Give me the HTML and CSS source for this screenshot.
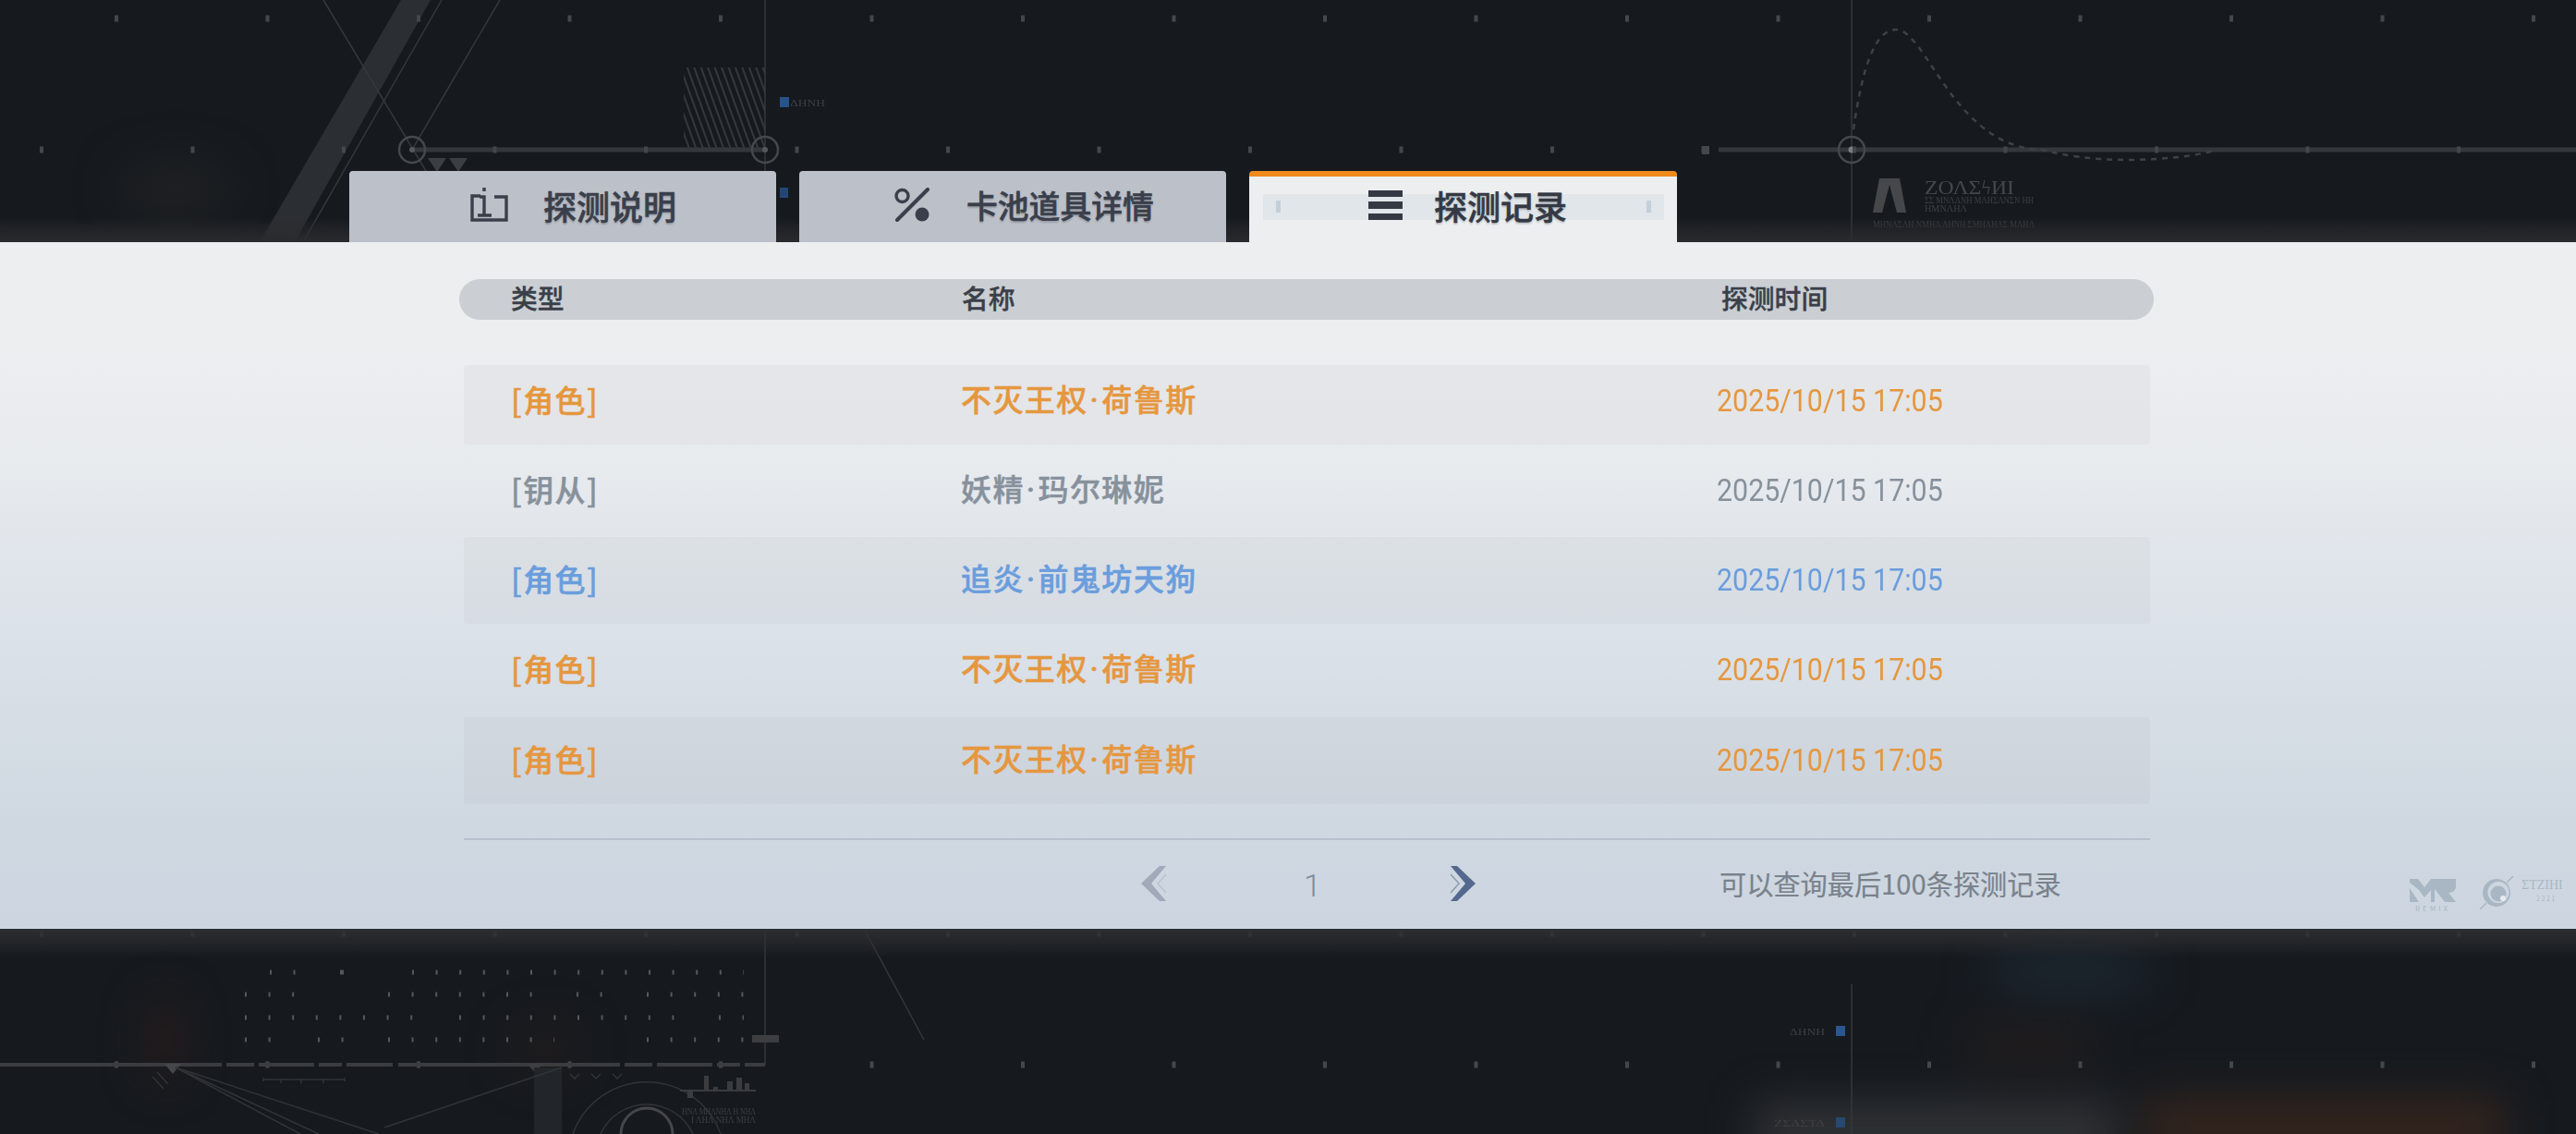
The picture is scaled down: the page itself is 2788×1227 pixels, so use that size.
FILE: index.html
```html
<!DOCTYPE html>
<html lang="zh-CN">
<head>
    <meta charset="UTF-8">
    <meta name="viewport" content="width=device-width, initial-scale=1.0">
    <title>探测记录</title>
    <link rel="stylesheet" href="styles.css">
</head>
<body>
    <div class="screen">
        <!-- фон: чертёж -->
        <svg class="backdrop" viewBox="0 0 2788 1227" aria-hidden="true">
            <defs>
                <filter id="blur30" color-interpolation-filters="sRGB"><feGaussianBlur stdDeviation="24"/></filter>
                <filter id="blur2" color-interpolation-filters="sRGB"><feGaussianBlur stdDeviation="0.7"/></filter>
                <linearGradient id="fadeTop" x1="0" y1="0" x2="0" y2="1">
                    <stop offset="0" stop-color="#2a2b2e" stop-opacity="0"/>
                    <stop offset="1" stop-color="#2a2b2e"/>
                </linearGradient>
                <linearGradient id="fadeBottom" x1="0" y1="0" x2="0" y2="1">
                    <stop offset="0" stop-color="#2d2e31"/>
                    <stop offset="1" stop-color="#2d2e31" stop-opacity="0"/>
                </linearGradient>
                <pattern id="hatch" width="7" height="7" patternUnits="userSpaceOnUse" patternTransform="rotate(-20)">
                    <line x1="2" y1="0" x2="2" y2="7" stroke="#3d4044" stroke-width="1.6"/>
                </pattern>
            </defs>

            <g filter="url(#blur30)">
                <ellipse cx="190" cy="205" rx="60" ry="30" fill="#1f2123"/>
                <ellipse cx="178" cy="1125" rx="18" ry="45" fill="#2a1c1a"/>
                <ellipse cx="590" cy="1135" rx="35" ry="25" fill="#211c1c"/>
                <ellipse cx="2240" cy="1050" rx="90" ry="26" fill="#1c2730"/>
                <rect x="2130" y="1115" width="130" height="35" fill="#241d1c"/>
                <rect x="1900" y="1195" width="390" height="60" fill="#323437"/>
                <rect x="2320" y="1190" width="390" height="60" fill="#36251d"/>
            </g>

            <g filter="url(#blur2)">
                <polygon points="434,0 466,0 319,262 281,262" fill="#2b2e32"/>
                <g fill="none" stroke="#34373b" stroke-width="1.5">
                    <line x1="478" y1="0" x2="328" y2="262"/>
                    <line x1="541" y1="0" x2="446" y2="162"/>
                    <line x1="350" y1="0" x2="470" y2="200"/>
                    <line x1="828" y1="0" x2="828" y2="185"/>
                    <line x1="2004" y1="0" x2="2004" y2="262"/>
                    <line x1="828" y1="1005" x2="828" y2="1152"/>
                    <line x1="2004" y1="1065" x2="2004" y2="1227"/>
                    <line x1="935" y1="1005" x2="1000" y2="1125"/>
                </g>

                <rect x="740" y="73" width="88" height="89" fill="url(#hatch)"/>
                <polygon points="463,171 483,171 473,186" fill="#3b3e43"/>
                <polygon points="486,171 506,171 496,186" fill="#3b3e43"/>

                <g fill="none" stroke="#34373b" stroke-width="5">
                    <line x1="446" y1="162" x2="828" y2="162"/>
                    <line x1="1860" y1="162" x2="2788" y2="162"/>
                </g>
                <g fill="none" stroke="#45484c" stroke-width="2.5">
                    <ellipse cx="446" cy="162" rx="14" ry="14"/>
                    <ellipse cx="828" cy="162" rx="14" ry="14"/>
                    <ellipse cx="2004" cy="162" rx="14" ry="14"/>
                </g>
                <circle cx="446" cy="162" r="3" fill="#55585c"/>
                <circle cx="828" cy="162" r="3" fill="#55585c"/>
                <circle cx="2004" cy="162" r="3.5" fill="#7a7c80"/>

                <!-- точки сетки -->
                <g fill="none" stroke="#44474b" stroke-width="7">
                    <line x1="124" y1="20" x2="2788" y2="20" stroke-dasharray="4 159.5"/>
                    <line x1="43" y1="162" x2="2788" y2="162" stroke-dasharray="4 159.5"/>
                    <line x1="43" y1="1010" x2="2788" y2="1010" stroke-dasharray="4 159.5"/>
                    <line x1="124" y1="1152" x2="2788" y2="1152" stroke-dasharray="4 159.5"/>
                </g>

                <path d="M2006 140 C2016 70 2030 32 2052 32 C2085 32 2115 160 2210 162 C2250 172 2280 173 2310 173 C2350 172 2380 168 2400 162" fill="none" stroke="#3e4145" stroke-width="2.5" stroke-dasharray="6 6"/>
                <polygon points="2034,193 2056,193 2063,230 2053,230 2045,200 2037,230 2027,230" fill="#45474b"/>
                <text class="art-title" x="2083" y="210" textLength="97" lengthAdjust="spacingAndGlyphs">ΖΟΛΣϟИΙ</text>
                <text class="art-small" x="2083" y="220" textLength="118" lengthAdjust="spacingAndGlyphs">ΣΣ ΜΝΛΛΝΗ ΜΛΗΣΛΝΣΝ ΗΗ</text>
                <text class="art-small" x="2083" y="229" textLength="46" lengthAdjust="spacingAndGlyphs">ΗΜΝΛΗΛ</text>
                <text class="art-small" x="2027" y="246" textLength="175" lengthAdjust="spacingAndGlyphs">ΜΗΝΛΣΛΗ ΝΜΗΛ ΛΗΝΗ ΣΜΗΛΗΛΣ ΜΛΗΛ</text>

                <rect x="844" y="105" width="10" height="11" fill="#27528a"/>
                <text class="art-small" x="855" y="115" textLength="38" lengthAdjust="spacingAndGlyphs">ΔΗΝΗ</text>
                <rect x="844" y="203" width="9" height="11" fill="#234676"/>
                <rect x="1987" y="1110" width="10" height="11" fill="#2b5690"/>
                <text class="art-small" x="1937" y="1120" textLength="38" lengthAdjust="spacingAndGlyphs">ΔΗΝΗ</text>
                <rect x="1987" y="1209" width="10" height="11" fill="#27486f"/>
                <text class="art-small" x="1920" y="1219" textLength="55" lengthAdjust="spacingAndGlyphs">ΖΣΔΣΤΔ</text>
                <rect x="1842" y="158" width="8" height="9" fill="#44474b"/>

                <!-- матрица точек -->
                <g fill="none" stroke="#55585c" stroke-width="5">
                    <line x1="292" y1="1052" x2="320" y2="1052" stroke-dasharray="2 23.5"/>
                    <line x1="368" y1="1052" x2="372" y2="1052"/>
                    <line x1="446" y1="1052" x2="805" y2="1052" stroke-dasharray="2 23.6"/>
                    <line x1="265" y1="1076" x2="320" y2="1076" stroke-dasharray="2 23.6"/>
                    <line x1="420" y1="1076" x2="576" y2="1076" stroke-dasharray="2 23.6"/>
                    <line x1="624" y1="1076" x2="652" y2="1076" stroke-dasharray="2 23.6"/>
                    <line x1="700" y1="1076" x2="805" y2="1076" stroke-dasharray="2 23.6"/>
                    <line x1="265" y1="1101" x2="450" y2="1101" stroke-dasharray="2 23.6"/>
                    <line x1="497" y1="1101" x2="730" y2="1101" stroke-dasharray="2 23.6"/>
                    <line x1="778" y1="1101" x2="805" y2="1101" stroke-dasharray="2 23.6"/>
                    <line x1="265" y1="1125" x2="296" y2="1125" stroke-dasharray="2 23.6"/>
                    <line x1="344" y1="1125" x2="372" y2="1125" stroke-dasharray="2 23.6"/>
                    <line x1="420" y1="1125" x2="600" y2="1125" stroke-dasharray="2 23.6"/>
                    <line x1="700" y1="1125" x2="805" y2="1125" stroke-dasharray="2 23.6"/>
                </g>

                <rect x="814" y="1120" width="29" height="8" fill="#3c3e42"/>
                <line x1="0" y1="1152" x2="828" y2="1152" stroke="#3a3c40" stroke-width="4" stroke-dasharray="240 5 30 5 60 5 25 5 50 6"/>
                <polygon points="178,1151 196,1151 187,1162" fill="#45474b"/>
                <polygon points="570,1151 588,1151 579,1160" fill="#3c3e42"/>
                <rect x="578" y="1155" width="30" height="72" fill="#222529"/>
                <g fill="none" stroke="#303337" stroke-width="1.5">
                    <line x1="190" y1="1155" x2="410" y2="1227"/>
                    <line x1="190" y1="1155" x2="345" y2="1227"/>
                    <line x1="190" y1="1155" x2="325" y2="1227"/>
                    <line x1="416" y1="1220" x2="608" y2="1155"/>
                    <line x1="165" y1="1165" x2="177" y2="1178"/>
                    <line x1="170" y1="1160" x2="182" y2="1173"/>
                    <path d="M285 1170 V1166 M285 1168 H373 M373 1170 V1166 M304 1168 V1172 M326 1168 V1172 M350 1168 V1172"/>
                    <path d="M620 1227 A85 85 0 0 1 780 1227"/>
                    <path d="M650 1227 A55 55 0 0 1 750 1227"/>
                    <path d="M617 1162 L622 1167 L627 1162 M640 1162 L645 1167 L650 1162 M663 1162 L668 1167 L673 1162"/>
                </g>
                <path d="M672 1227 A28 28 0 0 1 728 1227" fill="none" stroke="#45474b" stroke-width="3"/>
                <path d="M736 1180 H818" stroke="#3a3c40" stroke-width="2"/>
                <path d="M744 1180v8h6v-8zM762 1164h5v16h-5zM772 1176h5v4h-5zM787 1170h6v10h-6zM797 1166h6v14h-6zM806 1172h5v8h-5z" fill="#3a3c40"/>
                <text class="art-small" x="738" y="1206" textLength="80" lengthAdjust="spacingAndGlyphs">ΗΝΛ ΜΗΛΝΗΛ Η ΝΗΛ</text>
                <text class="art-small" x="748" y="1215" textLength="70" lengthAdjust="spacingAndGlyphs">Ι ΛΗΛ ΝΗΛ ΜΗΛ</text>
            </g>

            <rect x="0" y="235" width="2788" height="27" fill="url(#fadeTop)"/>
            <rect x="0" y="1005" width="2788" height="32" fill="url(#fadeBottom)"/>
        </svg>

        <nav class="tabs">
            <div class="tab tab-info">
                <svg class="tab-icon" width="41" height="38" viewBox="0 0 41 38">
                    <path d="M11 9 H2 V35 H39 V10 H26" fill="none" stroke="#3a3f4b" stroke-width="3.4"/>
                    <path d="M15 0 v4 M10 10 H15 V29 M8 30 H23" fill="none" stroke="#3a3f4b" stroke-width="3.4"/>
                </svg>
                <span>探测说明</span>
            </div>
            <div class="tab tab-items">
                <svg class="tab-icon" width="38" height="38" viewBox="0 0 38 38">
                    <circle cx="8.5" cy="9" r="6.5" fill="none" stroke="#3a3f4b" stroke-width="3.4"/>
                    <line x1="3" y1="35" x2="36" y2="2" stroke="#3a3f4b" stroke-width="4" stroke-linecap="round"/>
                    <circle cx="30" cy="29" r="7.5" fill="#3a3f4b"/>
                </svg>
                <span>卡池道具详情</span>
            </div>
            <div class="tab tab-log active">
                <div class="tab-deco">
                    <i class="deco-mark left"></i>
                    <i class="deco-mark right"></i>
                </div>
                <svg class="tab-icon" width="37" height="32" viewBox="0 0 37 32">
                    <rect width="37" height="7" fill="#343944"/>
                    <rect y="12" width="37" height="8" fill="#343944"/>
                    <rect y="25" width="37" height="7" fill="#343944"/>
                </svg>
                <span>探测记录</span>
            </div>
        </nav>

        <main class="panel">
            <div class="table-head">
                <span>类型</span>
                <span>名称</span>
                <span>探测时间</span>
            </div>

            <div class="rows">
                <div class="row band first gold">
                    <span>[角色]</span>
                    <span class="name">不灭王权<span class="dot">·</span>荷鲁斯</span>
                    <span class="time">2025/10/15 17:05</span>
                </div>
                <div class="row grey">
                    <span>[钥从]</span>
                    <span class="name">妖精<span class="dot">·</span>玛尔琳妮</span>
                    <span class="time">2025/10/15 17:05</span>
                </div>
                <div class="row band blue">
                    <span>[角色]</span>
                    <span class="name">追炎<span class="dot">·</span>前鬼坊天狗</span>
                    <span class="time">2025/10/15 17:05</span>
                </div>
                <div class="row gold">
                    <span>[角色]</span>
                    <span class="name">不灭王权<span class="dot">·</span>荷鲁斯</span>
                    <span class="time">2025/10/15 17:05</span>
                </div>
                <div class="row band gold">
                    <span>[角色]</span>
                    <span class="name">不灭王权<span class="dot">·</span>荷鲁斯</span>
                    <span class="time">2025/10/15 17:05</span>
                </div>
            </div>

            <div class="pager">
                <svg class="chevron" width="28" height="38" viewBox="0 0 28 38">
                    <polygon points="27,0 20,0 0,19 20,38 27,38 11,19" fill="#a0aab8"/>
                    <path d="M27 9 L18 19 L27 29" fill="none" stroke="#b9c1cc" stroke-width="1.5"/>
                </svg>
                <span class="page-num">1</span>
                <svg class="chevron" width="28" height="38" viewBox="0 0 28 38">
                    <polygon points="1,0 8,0 28,19 8,38 1,38 17,19" fill="#55698f"/>
                    <path d="M1 9 L10 19 L1 29" fill="none" stroke="#8b99b0" stroke-width="1.5"/>
                </svg>
                <span class="pager-note">可以查询最后100条探测记录</span>
            </div>

            <!-- логотипы в углу -->
            <div class="logos">
                <div class="logo-mr">
                    <svg width="50" height="25" viewBox="0 0 50 25">
                        <path d="M0 0 H9 L16 9 L23 0 H50 V8 C50 13 46 15 42 15 L50 25 H38 L27 11 V25 H23 V12 L16 20 L10 12 L0 4Z M0 10 L10 25 H0Z" fill="#a9b7c4"/>
                    </svg>
                    <span>REMIX</span>
                </div>
                <svg class="logo-ring" width="38" height="38" viewBox="0 0 38 38">
                    <line x1="1" y1="37" x2="8" y2="30" stroke="#a9b7c4" stroke-width="1.5"/>
                    <line x1="30" y1="8" x2="37" y2="1" stroke="#a9b7c4" stroke-width="1.5"/>
                    <path fill-rule="evenodd" d="M19 4 A15 15 0 1 0 19 34 A15 15 0 1 0 19 4Z M21 7 A11.5 11.5 0 1 1 21 30 A11.5 11.5 0 1 1 21 7Z" fill="#a9b7c4"/>
                    <circle cx="21" cy="20" r="8.5" fill="#a9b7c4"/>
                    <circle cx="26" cy="25" r="3" fill="#e6ebef"/>
                </svg>
                <div class="logo-name">
                    <span class="logo-title">ΣΤΖΙΗΙ</span>
                    <span class="logo-sub">2 2 2 1</span>
                </div>
            </div>
        </main>
    </div>
</body>
</html>
```

FILE: styles.css
```css
* {
    box-sizing: border-box;
}
body {
    margin: 0;
    background-color: #161a1f;
    font-family: "Noto Sans CJK SC", "Noto Sans", sans-serif;
}
.screen {
    position: relative;
    width: 2788px;
    height: 1227px;
    overflow: hidden;
    padding-top: 185px;
    background-color: #161a1f;
}
.backdrop {
    position: absolute;
    top: 0;
    left: 0;
    width: 2788px;
    height: 1227px;
}
.art-title {
    font-family: "Liberation Serif", serif;
    font-size: 20px;
    fill: #45474b;
}
.art-small {
    font-family: "Liberation Serif", serif;
    font-size: 11px;
    fill: #3c3f43;
}

/* Вкладки */
.tabs {
    position: relative;
    display: flex;
    gap: 25px;
    height: 77px;
    padding-left: 378px;
}
.tab {
    position: relative;
    display: flex;
    align-items: center;
    width: 462px;
    height: 77px;
    padding-bottom: 3px;
    background-color: #bcc0c8;
    border-radius: 4px 4px 0 0;
    color: #3a3f4b;
    font-size: 36px;
    font-weight: 500;
    line-height: 1;
    -webkit-text-stroke: 0.6px currentColor;
    text-shadow: 0 2px 2px rgba(40,44,56,0.25);
}
.tab-icon {
    flex: none;
    position: relative;
}
.tab span {
    position: relative;
}
.tab-info {
    padding-left: 131px;
    gap: 38px;
}
.tab-items {
    padding-left: 103px;
    gap: 40px;
    font-size: 33.8px;
}
.tab-log {
    padding-left: 129px;
    gap: 34px;
}
.tab.active {
    width: 463px;
    padding-bottom: 9px;
    background-color: #eceef0;
    border-top: 6px solid #f08a1d;
    color: #343944;
}
.tab-deco {
    position: absolute;
    top: 19px;
    left: 15px;
    right: 14px;
    height: 28px;
    background-color: #e0e6ea;
}
.deco-mark {
    position: absolute;
    top: 7px;
    width: 5px;
    height: 13px;
    background-color: #c3d0da;
}
.deco-mark.left {
    left: 14px;
}
.deco-mark.right {
    right: 14px;
}

/* Панель */
.panel {
    position: relative;
    height: 743px;
    padding-top: 40px;
    background: linear-gradient(180deg, #eceef0 0%, #eceef0 15%, #e8ebee 32%, #e3e7ec 40%, #d9e0e7 62%, #cfd8e1 85%, #cdd6e0 100%);
}
.table-head {
    display: grid;
    grid-template-columns: 488px 822px 1fr;
    align-items: center;
    width: 1834px;
    height: 44px;
    margin-left: 497px;
    padding-left: 56px;
    padding-bottom: 4px;
    background-color: #cbced3;
    border-radius: 22px;
    color: #3a3f49;
    font-size: 28.8px;
    font-weight: 500;
    line-height: 1;
    -webkit-text-stroke: 0.4px currentColor;
}
.rows {
    width: 1825px;
    margin-left: 502px;
    margin-top: 49px;
}
.row {
    display: grid;
    grid-template-columns: 487px 818px 1fr;
    align-items: center;
    height: 94px;
    margin-bottom: 3.3px;
    padding-left: 51px;
    padding-bottom: 3px;
    border-radius: 4px;
    font-size: 33px;
    font-weight: 500;
    letter-spacing: 1.4px;
    line-height: 1;
    -webkit-text-stroke: 0.5px currentColor;
}
.row.band {
    background-color: rgba(100,100,100,0.048);
}
.row.first {
    height: 86px;
    margin-bottom: 2.7px;
    padding-bottom: 11px;
}
.row.gold {
    color: #e5973f;
}
.row.grey {
    color: #87919c;
}
.row.blue {
    color: #6a9ddc;
}
.dot {
    margin: 0 2px;
    font-family: Roboto, sans-serif;
}
.time {
    display: inline-block;
    padding-top: 2px;
    font-family: Roboto, "Noto Sans", sans-serif;
    font-size: 33px;
    font-weight: 400;
    letter-spacing: 0;
    white-space: nowrap;
    -webkit-text-stroke: 0;
    transform: scaleX(0.92);
    transform-origin: left center;
}

/* Пагинация */
.pager {
    display: flex;
    align-items: center;
    width: 1825px;
    height: 97px;
    margin-left: 502px;
    margin-top: 37px;
    padding-left: 733px;
    border-top: 2px solid #b5c0cc;
}
.page-num {
    width: 306px;
    padding-left: 148px;
    padding-top: 3px;
    color: #7e8ca0;
    font-family: Roboto, sans-serif;
    font-size: 34px;
    font-weight: 300;
    line-height: 1;
}
.pager-note {
    margin-left: 264px;
    color: #7a828c;
    font-size: 29.2px;
    line-height: 1;
    white-space: nowrap;
    -webkit-text-stroke: 0.2px currentColor;
}

.logos {
    position: absolute;
    top: 689px;
    left: 2608px;
    display: flex;
    gap: 25px;
    align-items: flex-start;
    color: #a9b7c4;
}
.logo-mr {
    display: flex;
    flex-direction: column;
    gap: 3px;
    align-items: center;
    font-size: 8px;
    letter-spacing: 3px;
    line-height: 1;
}
.logo-ring {
    margin-top: -4px;
}
.logo-name {
    display: flex;
    flex-direction: column;
    align-items: flex-start;
    gap: 4px;
    margin-left: -17px;
    line-height: 1;
    white-space: nowrap;
}
.logo-title {
    font-family: "Liberation Serif", serif;
    font-size: 14px;
}
.logo-sub {
    margin-left: 16px;
    font-size: 7px;
}
```
